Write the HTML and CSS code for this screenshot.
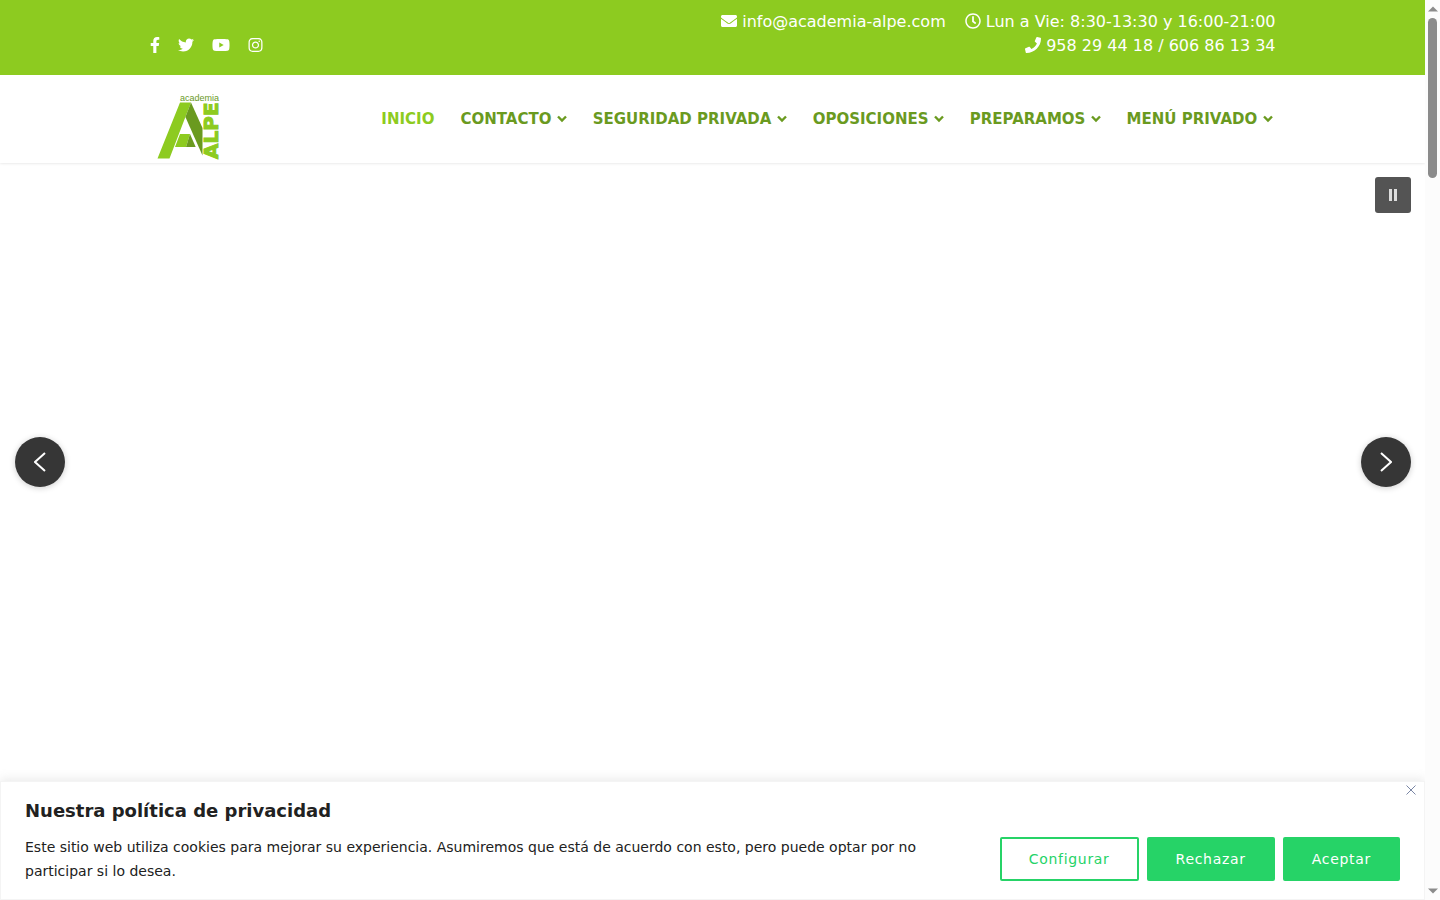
FILE: index.html
```
<!DOCTYPE html>
<html lang="es">
	<head>
		<meta charset="UTF-8">
		<title>Academia Alpe</title>
		<link rel="stylesheet" href="styles.css">
	</head>
	<body>
		<div id="page">
			<!--barra superior-->
			<div id="topbar">
				<div class="container">
					<ul class="social">
						<li><a href="#" aria-label="Facebook"><svg width="10" height="16" viewBox="0 0 320 512"><path d="M279.14 288l14.22-92.66h-88.91v-60.13c0-25.35 12.42-50.06 52.24-50.06h40.42V6.26S260.43 0 225.36 0c-73.22 0-121.08 44.38-121.08 124.72v70.62H22.89V288h81.39v224h100.17V288z"/></svg></a></li>
						<li><a href="#" aria-label="Twitter"><svg width="16" height="16" viewBox="0 0 512 512"><path d="M459.37 151.716c.325 4.548.325 9.097.325 13.645 0 138.72-105.583 298.558-298.558 298.558-59.452 0-114.68-17.219-161.137-47.106 8.447.974 16.568 1.299 25.34 1.299 49.055 0 94.213-16.568 130.274-44.832-46.132-.975-84.792-31.188-98.112-72.772 6.498.974 12.995 1.624 19.818 1.624 9.421 0 18.843-1.3 27.614-3.573-48.081-9.747-84.143-51.98-84.143-102.985v-1.299c13.969 7.797 30.214 12.67 47.431 13.319-28.264-18.843-46.781-51.005-46.781-87.391 0-19.492 5.197-37.36 14.294-52.954 51.655 63.675 129.3 105.258 216.365 109.807-1.624-7.797-2.599-15.918-2.599-24.04 0-57.828 46.782-104.934 104.934-104.934 30.213 0 57.502 12.67 76.67 33.137 23.715-4.548 46.456-13.32 66.599-25.34-7.798 24.366-24.366 44.833-46.132 57.827 21.117-2.273 41.584-8.122 60.426-16.243-14.292 20.791-32.161 39.308-52.628 54.253z"/></svg></a></li>
						<li><a href="#" aria-label="YouTube"><svg width="18" height="16" viewBox="0 0 576 512"><path d="M549.655 124.083c-6.281-23.65-24.787-42.276-48.284-48.597C458.781 64 288 64 288 64S117.22 64 74.629 75.486c-23.497 6.322-42.003 24.947-48.284 48.597-11.412 42.867-11.412 132.305-11.412 132.305s0 89.438 11.412 132.305c6.281 23.65 24.787 41.5 48.284 47.821C117.22 448 288 448 288 448s170.78 0 213.371-11.486c23.497-6.321 42.003-24.171 48.284-47.821 11.412-42.867 11.412-132.305 11.412-132.305s0-89.438-11.412-132.305zm-317.51 213.508V175.185l142.739 81.205-142.739 81.201z"/></svg></a></li>
						<li><a href="#" aria-label="Instagram"><svg width="15" height="16" viewBox="0 0 448 512"><path d="M224.1 141c-63.6 0-114.9 51.3-114.9 114.9s51.3 114.9 114.9 114.9S339 319.5 339 255.9 287.7 141 224.1 141zm0 189.6c-41.1 0-74.7-33.5-74.7-74.7s33.5-74.7 74.7-74.7 74.7 33.5 74.7 74.7-33.6 74.7-74.7 74.7zm146.4-194.3c0 14.9-12 26.8-26.8 26.8-14.9 0-26.8-12-26.8-26.8s12-26.8 26.8-26.8 26.8 12 26.8 26.8zm76.1 27.2c-1.7-35.9-9.9-67.7-36.2-93.9-26.2-26.2-58-34.4-93.9-36.2-37-2.1-147.9-2.1-184.9 0-35.8 1.7-67.6 9.9-93.9 36.1s-34.4 58-36.2 93.9c-2.1 37-2.1 147.9 0 184.9 1.7 35.9 9.9 67.7 36.2 93.9s58 34.4 93.9 36.2c37 2.1 147.9 2.1 184.9 0 35.9-1.7 67.7-9.9 93.9-36.2 26.2-26.2 34.4-58 36.2-93.9 2.1-37 2.1-147.8 0-184.8zM398.8 388c-7.8 19.6-22.9 34.7-42.6 42.6-29.5 11.7-99.5 9-132.1 9s-102.7 2.6-132.1-9c-19.6-7.8-34.7-22.9-42.6-42.6-11.7-29.5-9-99.5-9-132.1s-2.6-102.7 9-132.1c7.8-19.6 22.9-34.7 42.6-42.6 29.5-11.7 99.5-9 132.1-9s102.7-2.6 132.1 9c19.6 7.8 34.7 22.9 42.6 42.6 11.7 29.5 9 99.5 9 132.1s2.7 102.7-9 132.1z"/></svg></a></li>
					</ul>
					<ul class="info">
						<li><svg width="16" height="16" viewBox="0 0 512 512"><path d="M502.3 190.8c3.9-3.1 9.7-.2 9.7 4.7V400c0 26.5-21.5 48-48 48H48c-26.5 0-48-21.5-48-48V195.6c0-5 5.7-7.8 9.7-4.7 22.4 17.4 52.1 39.5 154.1 113.6 21.1 15.4 56.7 47.8 92.2 47.6 35.7.3 72-32.8 92.3-47.6 102-74.1 131.6-96.3 154-113.7zM256 320c23.2.4 56.6-29.2 73.4-41.4 132.7-96.3 142.8-104.7 173.4-128.7 5.8-4.5 9.2-11.5 9.2-18.9v-19c0-26.5-21.5-48-48-48H48c-26.5 0-48 21.5-48 48v19c0 7.4 3.4 14.3 9.2 18.9 30.6 23.9 40.7 32.4 173.4 128.7 16.8 12.2 50.2 41.8 73.4 41.4z"/></svg> <a href="mailto:info@academia-alpe.com">info@academia-alpe.com</a></li>
						<li><svg width="16" height="16" viewBox="0 0 512 512"><path d="M256 8C119 8 8 119 8 256s111 248 248 248 248-111 248-248S393 8 256 8zm0 448c-110.5 0-200-89.5-200-200S145.5 56 256 56s200 89.5 200 200-89.5 200-200 200zm61.8-104.4l-84.9-61.7c-3.1-2.3-4.9-5.9-4.9-9.7V116c0-6.6 5.4-12 12-12h32c6.6 0 12 5.4 12 12v141.7l66.8 48.6c5.4 3.9 6.5 11.4 2.6 16.8L334.6 349c-3.9 5.3-11.4 6.5-16.8 2.6z"/></svg> Lun a Vie: 8:30-13:30 y 16:00-21:00</li>
						<li><svg width="16" height="16" viewBox="0 0 512 512"><path d="M493.4 24.6l-104-24c-11.3-2.6-22.9 3.3-27.5 13.9l-48 112c-4.2 9.8-1.4 21.3 6.9 28l60.6 49.6c-36 76.7-98.9 140.5-177.2 177.2l-49.6-60.6c-6.8-8.3-18.2-11.1-28-6.9l-112 48C3.9 366.5-2 378.1.6 389.4l24 104C27.1 504.2 36.7 512 48 512c256.1 0 464-207.5 464-464 0-11.2-7.7-20.9-18.6-23.4z"/></svg> <a href="tel:958294418">958 29 44 18 / 606 86 13 34</a></li>
					</ul>
				</div>
			</div>

			<!--logo y menú-->
			<header id="header">
				<div class="container">
					<a href="#" class="logo" aria-label="Academia Alpe">
						<svg width="72" height="72" viewBox="154 90 72 72">
							<path fill="#8dcb20" d="M180 102.5h11l-5.6 14.5L169.5 158.5h-12z"/>
							<path fill="#6a9a1f" d="M191 102.5L202.5 128v27.5L185.4 117z"/>
							<path fill="#8dcb20" d="M180 134h10l-4 13h-11z"/>
							<path fill="#6a9a1f" d="M190 134l5.7 13H186z"/>
							<text class="small" x="180" y="101">academia</text>
							<text class="big" transform="translate(218 159) rotate(-90)">ALPE</text>
						</svg>
					</a>
					<nav>
						<ul class="menu">
							<li class="current"><a href="#">INICIO</a></li>
							<li><a href="#">CONTACTO <svg width="10" height="8" viewBox="0 0 10 8"><path d="M1 1.5l4 4 4-4"/></svg></a></li>
							<li><a href="#">SEGURIDAD PRIVADA <svg width="10" height="8" viewBox="0 0 10 8"><path d="M1 1.5l4 4 4-4"/></svg></a></li>
							<li><a href="#">OPOSICIONES <svg width="10" height="8" viewBox="0 0 10 8"><path d="M1 1.5l4 4 4-4"/></svg></a></li>
							<li><a href="#">PREPARAMOS <svg width="10" height="8" viewBox="0 0 10 8"><path d="M1 1.5l4 4 4-4"/></svg></a></li>
							<li><a href="#">MENÚ PRIVADO <svg width="10" height="8" viewBox="0 0 10 8"><path d="M1 1.5l4 4 4-4"/></svg></a></li>
						</ul>
					</nav>
				</div>
			</header>

			<!--slider-->
			<main id="slider">
				<button type="button" class="pause" aria-label="Pausa"><svg width="8" height="12" viewBox="0 0 8 12"><path d="M0 0h3v12H0zM5 0h3v12H5z"/></svg></button>
				<button type="button" class="arrow" aria-label="Anterior"><svg width="12" height="20" viewBox="0 0 12 20"><path d="M11 1L1 10l10 9"/></svg></button>
				<button type="button" class="arrow" aria-label="Siguiente"><svg width="12" height="20" viewBox="0 0 12 20"><path d="M1 1l10 9-10 9"/></svg></button>
			</main>

			<!--aviso de cookies-->
			<section id="cookies">
				<button type="button" class="close" aria-label="Cerrar"><svg width="10" height="10" viewBox="0 0 10 10"><path d="M.5 .5l9 9M9.5 .5l-9 9"/></svg></button>
				<h2>Nuestra política de privacidad</h2>
				<div class="row">
					<p>Este sitio web utiliza cookies para mejorar su experiencia. Asumiremos que está de acuerdo con esto, pero puede optar por no participar si lo desea.</p>
					<div class="btns">
						<button type="button" class="outline">Configurar</button>
						<button type="button">Rechazar</button>
						<button type="button">Aceptar</button>
					</div>
				</div>
			</section>
		</div>

		<!--barra de desplazamiento-->
		<div id="scrollbar" aria-hidden="true">
			<svg width="10" height="6" viewBox="0 0 10 6"><path d="M0 5.5L5 .5l5 5z"/></svg>
			<span class="thumb"></span>
			<svg width="10" height="6" viewBox="0 0 10 6"><path d="M0 .5l5 5 5-5z"/></svg>
		</div>
	</body>
</html>
```
FILE: styles.css
```
*{
	padding: 0;
	margin: 0;
	box-sizing: border-box;
}
body{
	display: flex;
	height: 100vh;
	overflow: hidden;
	background-color: #fff;
	font-family: "DejaVu Sans", sans-serif;
	font-size: 16px;
	line-height: 24px;
}
a{
	color: inherit;
	text-decoration: none;
}
ul{
	list-style: none;
}
button{
	border: 0;
	font-family: inherit;
	cursor: pointer;
}
#page{
	flex: 1;
	min-width: 0;
	position: relative;
	overflow: hidden;
}
.container{
	display: flex;
	justify-content: space-between;
	max-width: 1140px;
	margin: 0 auto;
	padding: 0 7px;
}

/* barra superior */
#topbar{
	position: relative;
	z-index: 1;
	padding: 10px 0 17px;
	background-color: #8dcb20;
	color: #fff;
}
#topbar .container{
	align-items: flex-end;
}
#topbar svg{
	fill: #fff;
}
.social{
	display: flex;
	gap: 18px;
}
.social a{
	display: flex;
	height: 21px;
}
.info{
	display: flex;
	flex-wrap: wrap;
	justify-content: flex-end;
	column-gap: 19px;
	width: 570px;
}
.info svg{
	vertical-align: -2px;
}

/* cabecera */
#header{
	position: relative;
	background-color: #fff;
	box-shadow: 0 0 3px rgba(0,0,0,0.15);
}
#header .container{
	align-items: center;
	height: 88px;
}
.logo{
	margin: 14px 0 0 4px;
}
.logo svg{
	display: block;
}
.logo .small{
	fill: #6a9a1f;
	font: 9px "Liberation Sans", sans-serif;
}
.logo .big{
	fill: #8dcb20;
	stroke: #8dcb20;
	font: bold 20px "DejaVu Sans", sans-serif;
}
.menu{
	display: flex;
	gap: 26px;
	padding-right: 3px;
	color: #6a9a1f;
	font-size: 15px;
	font-weight: bold;
	white-space: nowrap;
}
.menu .current{
	color: #8dcb20;
}
.menu svg{
	fill: none;
	stroke: #6a9a1f;
	stroke-width: 2.4;
	vertical-align: 1px;
}

/* slider */
#slider{
	display: flex;
	align-items: center;
	justify-content: space-between;
	position: relative;
	height: 598px;
	padding: 0 14px 0 15px;
}
#slider .arrow{
	display: flex;
	align-items: center;
	justify-content: center;
	width: 50px;
	height: 50px;
	border-radius: 50%;
	background-color: #363636;
	box-shadow: 0 1px 6px rgba(0,0,0,0.2);
}
#slider .arrow svg{
	fill: none;
	stroke: #fff;
	stroke-width: 2;
}
#slider .pause{
	display: flex;
	align-items: center;
	justify-content: center;
	position: absolute;
	top: 14px;
	right: 14px;
	width: 36px;
	height: 36px;
	border-radius: 3px;
	background-color: #545454;
}
#slider .pause svg{
	fill: #ddd;
}

/* cookies */
#cookies{
	position: absolute;
	left: 0;
	right: 0;
	bottom: 0;
	padding: 17px 24px 16px;
	border: 1px solid #f4f4f4;
	background-color: #fff;
	box-shadow: 0 -1px 10px rgba(172,171,171,0.3);
	color: #212121;
}
#cookies h2{
	margin-bottom: 12px;
	font-size: 18px;
	line-height: 24px;
}
#cookies .row{
	display: flex;
	align-items: center;
	justify-content: space-between;
}
#cookies p{
	max-width: 930px;
	padding-right: 32px;
	font-size: 14px;
}
#cookies .btns{
	display: flex;
	flex-shrink: 0;
	gap: 8px;
}
#cookies .btns button{
	height: 44px;
	padding: 0 27px;
	border: 2px solid #26d367;
	border-radius: 2px;
	background-color: #26d367;
	color: #fff;
	font-size: 14px;
	letter-spacing: 0.05em;
}
#cookies .btns .outline{
	background-color: transparent;
	color: #26d367;
}
#cookies .close{
	display: flex;
	position: absolute;
	top: 3px;
	right: 8px;
	background: none;
}
#cookies .close svg{
	fill: none;
	stroke: #7a86a5;
}

/* barra de desplazamiento */
#scrollbar{
	display: flex;
	flex-direction: column;
	align-items: center;
	width: 15px;
	padding: 6px 0;
	background-color: #fcfcfc;
}
#scrollbar svg{
	fill: #8b8b8b;
}
#scrollbar .thumb{
	width: 9px;
	height: 160px;
	margin: 6px 0 auto;
	border-radius: 5px;
	background-color: #8b8b8b;
}
```
